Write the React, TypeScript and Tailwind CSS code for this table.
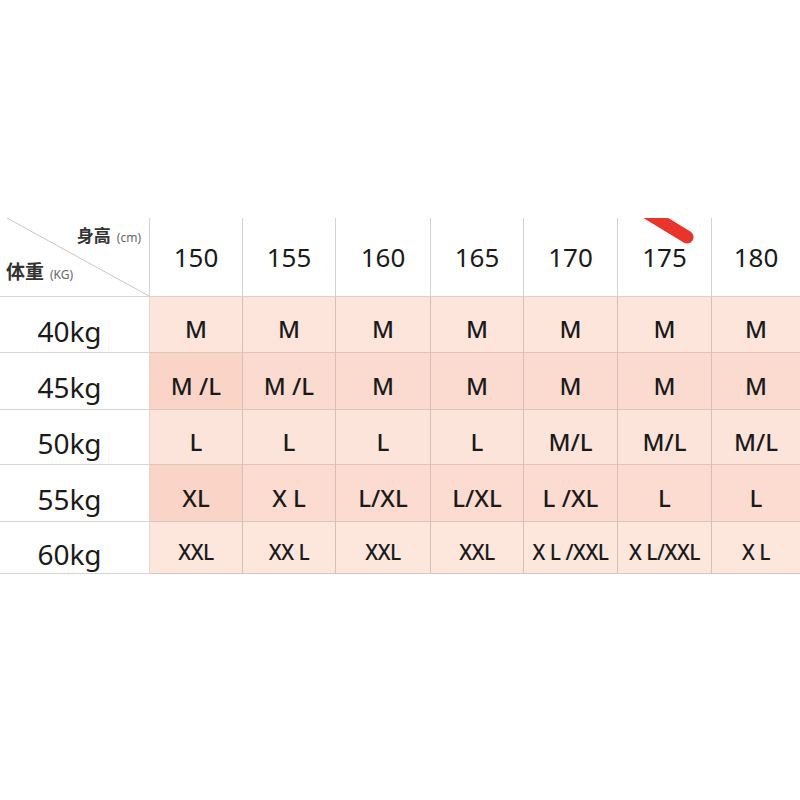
const heights = ["150", "155", "160", "165", "170", "175", "180"];

type Row = { weight: string; sizes: string[]; bg: string; small?: boolean };

const rows: Row[] = [
  { weight: "40kg", sizes: ["M", "M", "M", "M", "M", "M", "M"], bg: "bg-[#fde5db]" },
  { weight: "45kg", sizes: ["M /L", "M /L", "M", "M", "M", "M", "M"], bg: "bg-[#fbdacf]" },
  { weight: "50kg", sizes: ["L", "L", "L", "L", "M/L", "M/L", "M/L"], bg: "bg-[#fde4da]" },
  { weight: "55kg", sizes: ["XL", "X L", "L/XL", "L/XL", "L /XL", "L", "L"], bg: "bg-[#fcdcd1]" },
  { weight: "60kg", sizes: ["XXL", "XX L", "XXL", "XXL", "X L /XXL", "X L/XXL", "X L"], bg: "bg-[#fde6dc]", small: true },
];

function CornerCell() {
  return (
    <div className="relative border-r border-b border-[#d9d3cf] bg-white">
      <svg className="absolute inset-0 h-full w-full" viewBox="0 0 150 79" preserveAspectRatio="none">
        <line x1="7" y1="0" x2="150" y2="79" stroke="#c9c4c0" strokeWidth="1" />
      </svg>
      <div className="relative flex h-full flex-col justify-between pt-[9px] pb-[14px] pl-[6px] pr-[8px]">
        <div className="flex items-baseline justify-end gap-[6px]">
          <span className="text-[17px] font-bold leading-none text-[#333]">身高</span>
          <span className="text-[12px] leading-none text-[#666]">(cm)</span>
        </div>
        <div className="flex items-baseline gap-[6px]">
          <span className="text-[19px] font-bold leading-none text-[#333]">体重</span>
          <span className="text-[12px] leading-none text-[#666]">(KG)</span>
        </div>
      </div>
    </div>
  );
}

export default function App() {
  return (
    <div
      className="h-[800px] w-[800px] overflow-hidden bg-white pt-[218px] text-[#1a1a1a]"
      style={{ fontFamily: '"Noto Sans", "Noto Sans CJK SC", sans-serif' }}
    >
      <div className="relative">
        <div className="grid grid-cols-[150px_93px_93px_95px_93px_94px_94px_88px] grid-rows-[79px_56px_57px_55px_57px_52px]">
          <CornerCell />
          {heights.map((h, i) => (
            <div
              key={h}
              className={`flex items-center justify-center border-b border-[#ddd1cb] bg-white text-[26px] leading-none ${
                i < heights.length - 1 ? "border-r border-r-[#d2d2d2]" : ""
              }`}
            >
              {h}
            </div>
          ))}
          {rows.map((r) => (
            <RowCells key={r.weight} row={r} />
          ))}
        </div>
        <svg className="pointer-events-none absolute top-0 left-[638px] h-[34px] w-[64px]" viewBox="0 0 64 34">
          <path d="M8 -6 L49 19" stroke="#e8342b" strokeWidth="13" strokeLinecap="round" fill="none" />
        </svg>
      </div>
    </div>
  );
}

function RowCells({ row }: { row: Row }) {
  return (
    <>
      <div className="flex items-center justify-center border-r border-b border-r-[#e6d6cf] border-b-[#d6d6d6] bg-white pt-[12px] pr-[10px] text-[28px] leading-none">
        {row.weight}
      </div>
      {row.sizes.map((s, i) => (
        <div
          key={i}
          className={`flex items-center justify-center whitespace-nowrap border-b border-[#dcc6bc] pt-[9px] font-medium leading-none ${
            i < row.sizes.length - 1 ? "border-r border-r-[#d6c0b6]" : ""
          } ${i === 0 && (row.weight === "45kg" || row.weight === "55kg") ? "bg-[#fbd4c8]" : row.bg} ${
            row.small ? "text-[21px] tracking-[-0.5px]" : "text-[24px]"
          }`}
        >
          {s}
        </div>
      ))}
    </>
  );
}
